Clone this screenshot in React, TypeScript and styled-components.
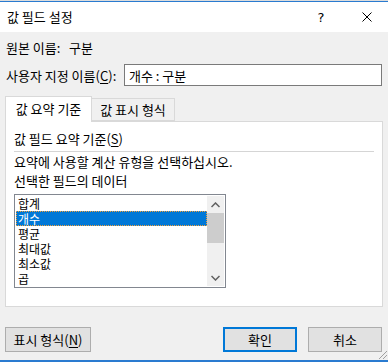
import styled, { createGlobalStyle } from 'styled-components'

const GlobalStyle = createGlobalStyle`
  html, body {
    margin: 0;
    padding: 0;
    background: #f0f0f0;
  }
  body {
    font-family: 'Noto Sans CJK KR', 'Noto Sans', sans-serif;
    font-size: 13px;
    color: #000;
  }
`

const TopStrip = styled.div`
  height: 1px;
  background: #dcdcdc;
`

const Window = styled.div`
  height: 358px;
  border-top: 1px solid #2a7bd0;
  border-bottom: 2px solid #2a7bd0;
  display: flex;
  flex-direction: column;
  background: #f0f0f0;
  position: relative;
`

const TitleBar = styled.div`
  height: 30px;
  background: #fff;
  display: flex;
  align-items: center;
  padding-left: 7px;
`

const Title = styled.div`
  flex: 1;
  line-height: 16px;
`

const HelpMark = styled.div`
  width: 14px;
  text-align: center;
  font-family: 'DejaVu Sans', sans-serif;
  font-size: 13px;
  margin-right: 16px;
`

const CloseBtn = styled.div`
  width: 46px;
  height: 30px;
  margin-right: -2px;
  display: flex;
  align-items: center;
  justify-content: center;
`

const Body = styled.div`
  flex: 1;
  display: flex;
  flex-direction: column;
  padding: 8px 5px 8px 5px;
`

const NameRow = styled.div`
  display: flex;
  line-height: 16px;
  padding-left: 1px;
`

const NameLabel = styled.span`
  width: 63px;
`

const CustomRow = styled.div`
  display: flex;
  align-items: center;
  margin-top: 8px;
  padding-left: 1px;
`

const Input = styled.div`
  margin-left: auto;
  margin-right: 1px;
  height: 20px;
  width: 252px;
  border: 1px solid #7a7a7a;
  background: #fff;
  display: flex;
  align-items: center;
  padding-left: 4px;
  box-sizing: content-box;
`

const Key = styled.u`
  text-decoration: underline;
  text-underline-offset: 2px;
`

const TabStrip = styled.div`
  display: flex;
  align-items: flex-end;
  margin-top: 10px;
  height: 25px;
  position: relative;
  z-index: 1;
`

const Tab = styled.div<{ $active?: boolean }>`
  box-sizing: border-box;
  height: ${({ $active }) => ($active ? '26px' : '23px')};
  margin-bottom: ${({ $active }) => ($active ? '-1px' : '0')};
  border: 1px solid #d9d9d9;
  border-bottom: ${({ $active }) => ($active ? 'none' : '1px solid #d9d9d9')};
  border-left: ${({ $active }) => ($active ? '1px solid #d9d9d9' : 'none')};
  background: ${({ $active }) => ($active ? '#fff' : '#f0f0f0')};
  width: ${({ $active }) => ($active ? '87px' : '83px')};
  display: flex;
  align-items: center;
  justify-content: center;
  padding-bottom: ${({ $active }) => ($active ? '2px' : '0')};
`

const Panel = styled.div`
  height: 186px;
  box-sizing: border-box;
  border: 1px solid #d9d9d9;
  background: #fff;
  padding: 9px 8px 0 8px;
  display: flex;
  flex-direction: column;
`

const Line = styled.div<{ $gap?: number }>`
  line-height: 16px;
  margin-top: ${({ $gap }) => $gap ?? 0}px;
`

const Separator = styled.div`
  height: 1px;
  background: #d5d5d5;
  margin-top: 4px;
`

const ListBox = styled.div`
  margin-top: 5px;
  width: 212px;
  height: 94px;
  box-sizing: border-box;
  border: 1px solid #828790;
  padding: 1px;
  display: flex;
`

const Items = styled.div`
  flex: 1;
`

const Item = styled.div<{ $selected?: boolean }>`
  height: 15px;
  line-height: 13px;
  font-size: 12px;
  box-sizing: border-box;
  padding-left: 1px;
  background: ${({ $selected }) => ($selected ? '#0078d7' : 'transparent')};
  color: ${({ $selected }) => ($selected ? '#fff' : '#000')};
  border: 1px ${({ $selected }) => ($selected ? 'dotted #f2a03a' : 'solid transparent')};
`

const ScrollBar = styled.div`
  width: 17px;
  background: #f0f0f0;
  display: flex;
  flex-direction: column;
`

const ScrollArrow = styled.div`
  height: 17px;
  display: flex;
  align-items: center;
  justify-content: center;
`

const Thumb = styled.div`
  height: 30px;
  background: #cdcdcd;
`

const Track = styled.div`
  flex: 1;
`

const ButtonRow = styled.div`
  display: flex;
  gap: 11px;
  margin-top: 20px;
  padding-right: 1px;
`

const Button = styled.div<{ $default?: boolean; $wide?: boolean }>`
  box-sizing: border-box;
  height: 25px;
  width: ${({ $wide }) => ($wide ? '86px' : '74px')};
  background: #e1e1e1;
  border: ${({ $default }) => ($default ? '2px solid #0078d7' : '1px solid #adadad')};
  display: flex;
  align-items: center;
  justify-content: center;
`

const Spacer = styled.div`
  flex: 1;
`

const Grip = styled.svg`
  position: absolute;
  right: 0;
  bottom: 0;
`

const items = ['합계', '개수', '평균', '최대값', '최소값', '곱']

export default function App() {
  return (
    <>
      <GlobalStyle />
      <TopStrip />
      <Window>
        <TitleBar>
          <Title>값 필드 설정</Title>
          <HelpMark>?</HelpMark>
          <CloseBtn>
            <svg width="10" height="10" viewBox="0 0 10 10">
              <path d="M0.5 0.5 L9.5 9.5 M9.5 0.5 L0.5 9.5" stroke="#000" strokeWidth="1" />
            </svg>
          </CloseBtn>
        </TitleBar>
        <Body>
          <NameRow>
            <NameLabel>원본 이름:</NameLabel>
            <span>구분</span>
          </NameRow>
          <CustomRow>
            <span>
              사용자 지정 이름(<Key>C</Key>):
            </span>
            <Input>개수 : 구분</Input>
          </CustomRow>
          <TabStrip>
            <Tab $active>값 요약 기준</Tab>
            <Tab>값 표시 형식</Tab>
          </TabStrip>
          <Panel>
            <Line>
              값 필드 요약 기준(<Key>S</Key>)
            </Line>
            <Separator />
            <Line $gap={2}>요약에 사용할 계산 유형을 선택하십시오.</Line>
            <Line $gap={3}>선택한 필드의 데이터</Line>
            <ListBox>
              <Items>
                {items.map((item) => (
                  <Item key={item} $selected={item === '개수'}>
                    {item}
                  </Item>
                ))}
              </Items>
              <ScrollBar>
                <ScrollArrow>
                  <svg width="9" height="6" viewBox="0 0 9 6">
                    <path d="M0.5 5 L4.5 1 L8.5 5" stroke="#606060" strokeWidth="1.5" fill="none" />
                  </svg>
                </ScrollArrow>
                <Thumb />
                <Track />
                <ScrollArrow>
                  <svg width="9" height="6" viewBox="0 0 9 6">
                    <path d="M0.5 1 L4.5 5 L8.5 1" stroke="#606060" strokeWidth="1.5" fill="none" />
                  </svg>
                </ScrollArrow>
              </ScrollBar>
            </ListBox>
          </Panel>
          <ButtonRow>
            <Button $wide>
              표시 형식(<Key>N</Key>)
            </Button>
            <Spacer />
            <Button $default>확인</Button>
            <Button>취소</Button>
          </ButtonRow>
        </Body>
        <Grip width="10" height="10" viewBox="0 0 10 10">
          <path d="M9 1 L1 9 M9 5 L5 9" stroke="#a0a0a0" strokeWidth="1" />
        </Grip>
      </Window>
    </>
  )
}
